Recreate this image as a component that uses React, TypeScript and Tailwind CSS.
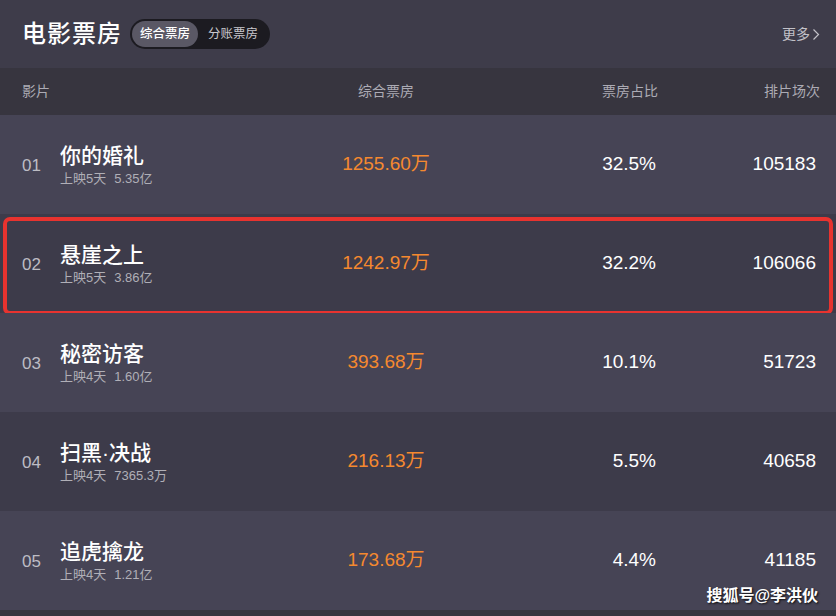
import React from "react";

type Movie = {
  rank: string;
  name: string;
  days: string;
  total: string;
  box: string;
  ratio: string;
  shows: string;
};

const movies: Movie[] = [
  { rank: "01", name: "你的婚礼", days: "上映5天", total: "5.35亿", box: "1255.60万", ratio: "32.5%", shows: "105183" },
  { rank: "02", name: "悬崖之上", days: "上映5天", total: "3.86亿", box: "1242.97万", ratio: "32.2%", shows: "106066" },
  { rank: "03", name: "秘密访客", days: "上映4天", total: "1.60亿", box: "393.68万", ratio: "10.1%", shows: "51723" },
  { rank: "04", name: "扫黑·决战", days: "上映4天", total: "7365.3万", box: "216.13万", ratio: "5.5%", shows: "40658" },
  { rank: "05", name: "追虎擒龙", days: "上映4天", total: "1.21亿", box: "173.68万", ratio: "4.4%", shows: "41185" },
];

const font = "font-['Liberation_Sans','Noto_Sans_CJK_SC',sans-serif]";
const cols = "grid grid-cols-[38px_240px_172px_184px_160px] pl-[22px] pr-[20px]";

export default function App() {
  return (
    <div className={`w-[836px] h-[616px] overflow-hidden bg-[#38363f] relative ${font}`}>
      {/* title bar */}
      <div className="h-[68px] bg-[#3e3c4a] flex items-center pl-[22px] pr-[16px]">
        <h1 className="text-[24px] font-medium text-white tracking-[1px]">电影票房</h1>
        <div className="ml-[8px] flex items-center h-[30px] rounded-full bg-[#1c1b21] p-[2px] text-[12.5px]">
          <span className="h-full px-[8px] flex items-center rounded-full bg-[#5a5865] text-white font-medium">综合票房</span>
          <span className="px-[10px] text-[#c9c8ce]">分账票房</span>
        </div>
        <div className="ml-auto flex items-center text-[14px] text-[#c2c1c8]">
          更多
          <svg width="8" height="13" viewBox="0 0 8 13" className="ml-[2px]">
            <path d="M1.5 1.5 L6.5 6.5 L1.5 11.5" fill="none" stroke="#c2c1c8" strokeWidth="1.2" />
          </svg>
        </div>
      </div>

      {/* column header */}
      <div className={`${cols} h-[47px] items-center bg-[#37353f] text-[14px] text-[#acabb4]`}>
        <span className="col-span-2">影片</span>
        <span className="text-center">综合票房</span>
        <span className="text-right mr-[-2px]">票房占比</span>
        <span className="text-right mr-[-4px]">排片场次</span>
      </div>

      {/* rows */}
      {movies.map((m, i) => (
        <div
          key={m.rank}
          className={`${cols} relative h-[99px] items-center ${i % 2 === 0 ? "bg-[#464455]" : "bg-[#3d3b4a]"}`}
        >
          <span className="text-[17px] text-[#bdbcc4] pt-[2px]">{m.rank}</span>
          <div className="flex flex-col">
            <span className="text-[21px] leading-[26px] text-white font-medium">{m.name}</span>
            <span className="mt-[1px] text-[13px] leading-[17px] text-[#b0afb7] flex gap-[8px]">
              <span>{m.days}</span>
              <span>{m.total}</span>
            </span>
          </div>
          <span className="text-center text-[19px] text-[#f5892f]">{m.box}</span>
          <span className="text-right text-[19px] text-white">{m.ratio}</span>
          <span className="text-right text-[19px] text-white">{m.shows}</span>
          {m.rank === "02" && (
            <div className="absolute left-[3px] right-[3px] top-[3px] bottom-[-2px] border-[4px] border-[#e8332f] rounded-[7px] pointer-events-none" />
          )}
        </div>
      ))}

      <div className="absolute right-[18px] bottom-[8px] text-[16px] leading-[24px] font-bold text-white [text-shadow:1px_1px_2px_rgba(0,0,0,0.85)]">
        搜狐号@李洪伙
      </div>
    </div>
  );
}
